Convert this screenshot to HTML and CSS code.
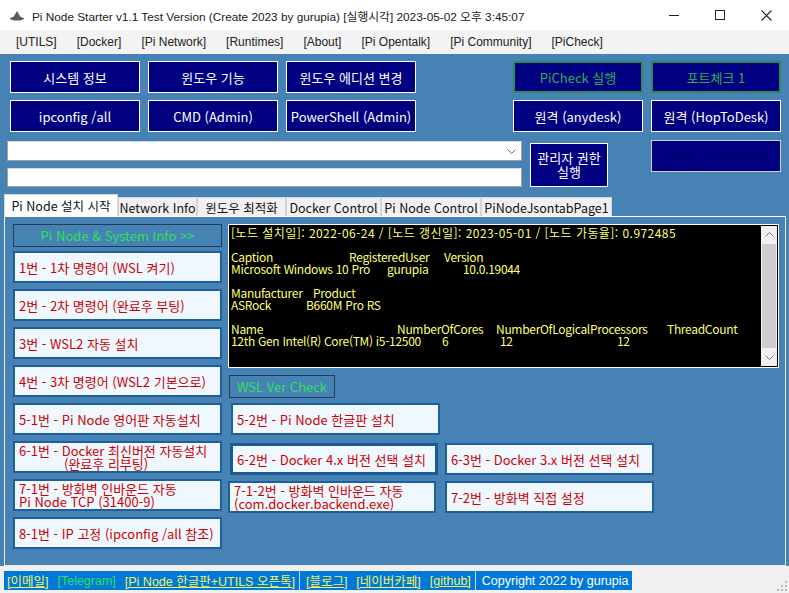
FILE: index.html
```html
<!DOCTYPE html>
<html lang="ko">
<head>
<meta charset="utf-8">
<title>Pi Node Starter</title>
<link rel="stylesheet" href="styles.css">
</head>
<body>
<div class="window">
  <div class="titlebar">
    <svg class="app-icon" width="14" height="10" viewBox="0 0 14 10"><path d="M7 0 L10.5 6 H3.5 Z" fill="#5a5a5a"/><ellipse cx="7" cy="7.6" rx="7" ry="2" fill="#5a5a5a"/></svg>
    <span class="title-text">Pi Node Starter v1.1 Test Version (Create 2023 by gurupia) [실행시각] 2023-05-02 오후 3:45:07</span>
    <div class="win-controls">
      <div class="wc"><span class="wc-min"></span></div>
      <div class="wc"><span class="wc-max"></span></div>
      <div class="wc"><svg width="11" height="11" viewBox="0 0 11 11"><path d="M0.5 0.5 L10.5 10.5 M10.5 0.5 L0.5 10.5" stroke="#222" stroke-width="1.1"/></svg></div>
    </div>
  </div>
  <div class="menubar">
    <span>[UTILS]</span><span>[Docker]</span><span>[Pi Network]</span><span>[Runtimes]</span><span>[About]</span><span>[Pi Opentalk]</span><span>[Pi Community]</span><span>[PiCheck]</span>
  </div>

  <div class="main">
    <div class="top">
      <div class="btn-row">
        <div class="group">
          <div class="nbtn">시스템 정보</div>
          <div class="nbtn">윈도우 기능</div>
          <div class="nbtn">윈도우 에디션 변경</div>
        </div>
        <div class="group right">
          <div class="nbtn green">PiCheck 실행</div>
          <div class="nbtn green">포트체크 1</div>
        </div>
      </div>
      <div class="btn-row second">
        <div class="group">
          <div class="nbtn">ipconfig /all</div>
          <div class="nbtn">CMD (Admin)</div>
          <div class="nbtn">PowerShell (Admin)</div>
        </div>
        <div class="group right">
          <div class="nbtn">원격 (anydesk)</div>
          <div class="nbtn">원격 (HopToDesk)</div>
        </div>
      </div>
      <div class="lower">
        <div class="inputs">
          <div class="combo"><svg width="9" height="5" viewBox="0 0 9 5"><path d="M0.5 0.5 L4.5 4.5 L8.5 0.5" stroke="#666" fill="none"/></svg></div>
          <div class="textbox"></div>
        </div>
        <div class="nbtn admin"><span>관리자 권한</span><span>실행</span></div>
        <div class="nbtn quick">Quick Command</div>
      </div>
    </div>

    <div class="tabs">
      <div class="tab active">Pi Node 설치 시작</div>
      <div class="tab">Network Info</div>
      <div class="tab">윈도우 최적화</div>
      <div class="tab">Docker Control</div>
      <div class="tab">Pi Node Control</div>
      <div class="tab">PiNodeJsontabPage1</div>
    </div>

    <div class="page">
      <div class="left-col">
        <div class="info-btn">Pi Node &amp; System Info &gt;&gt;</div>
        <div class="lbtn first">1번 - 1차 명령어 (WSL 켜기)</div>
        <div class="lbtn">2번 - 2차 명령어 (완료후 부팅)</div>
        <div class="lbtn">3번 - WSL2 자동 설치</div>
        <div class="lbtn">4번 - 3차 명령어 (WSL2 기본으로)</div>
        <div class="lbtn">5-1번 - Pi Node 영어판 자동설치</div>
        <div class="lbtn two"><span>6-1번 - Docker 최신버전 자동설치</span><span class="indent">(완료후 리부팅)</span></div>
        <div class="lbtn two"><span>7-1번 - 방화벽 인바운드 자동</span><span>Pi Node TCP (31400-9)</span></div>
        <div class="lbtn">8-1번 - IP 고정 (ipconfig /all 참조)</div>
      </div>
      <div class="right-area">
        <div class="console">
          <div class="console-text">
            <div class="ln wide">[노드 설치일]: 2022-06-24 / [노드 갱신일]: 2023-05-01 / [노드 가동율]: 0.972485</div>
            <div class="ln"></div>
            <div class="ln"><span class="c c118">Caption</span><span class="c c95">RegisteredUser</span><span class="c">Version</span></div>
            <div class="ln"><span class="c c156">Microsoft Windows 10 Pro</span><span class="c c76">gurupia</span><span class="c">10.0.19044</span></div>
            <div class="ln"></div>
            <div class="ln"><span class="c c82">Manufacturer</span><span class="c">Product</span></div>
            <div class="ln"><span class="c c75">ASRock</span><span class="c">B660M Pro RS</span></div>
            <div class="ln"></div>
            <div class="ln"><span class="c c166">Name</span><span class="c c99">NumberOfCores</span><span class="c c171">NumberOfLogicalProcessors</span><span class="c">ThreadCount</span></div>
            <div class="ln"><span class="c c211">12th Gen Intel(R) Core(TM) i5-12500</span><span class="c c58">6</span><span class="c c117">12</span><span class="c">12</span></div>
          </div>
          <div class="scrollbar">
            <div class="sb-arrow"><svg width="9" height="5" viewBox="0 0 9 5"><path d="M0.5 4.5 L4.5 0.5 L8.5 4.5" stroke="#777" fill="none"/></svg></div>
            <div class="sb-track"><div class="sb-thumb"></div></div>
            <div class="sb-arrow"><svg width="9" height="5" viewBox="0 0 9 5"><path d="M0.5 0.5 L4.5 4.5 L8.5 0.5" stroke="#777" fill="none"/></svg></div>
          </div>
        </div>
        <div class="wsl-btn">WSL Ver Check</div>
        <div class="mrow r1">
          <div class="lbtn m52">5-2번 - Pi Node 한글판 설치</div>
        </div>
        <div class="mrow r2">
          <div class="lbtn m62">6-2번 - Docker 4.x 버전 선택 설치</div>
          <div class="lbtn m63">6-3번 - Docker 3.x 버전 선택 설치</div>
        </div>
        <div class="mrow r3">
          <div class="lbtn two m712"><span>7-1-2번 - 방화벽 인바운드 자동</span><span>(com.docker.backend.exe)</span></div>
          <div class="lbtn m72">7-2번 - 방화벽 직접 설정</div>
        </div>
      </div>
    </div>

    <div class="statusbar">
      <div class="status-strip">
        <span class="link">[이메일]</span>
        <span class="tg">[Telegram]</span>
        <span class="link">[Pi Node 한글판+UTILS 오픈톡]</span>
        <span class="sep"></span>
        <span class="link">[블로그]</span>
        <span class="link">[네이버카페]</span>
        <span class="link">[github]</span>
        <span class="sep"></span>
        <span class="copy">Copyright 2022 by gurupia</span>
      </div>
      <svg class="grip" width="10" height="10" viewBox="0 0 10 10">
        <rect x="8" y="0" width="2" height="2" fill="#b5b5b5"/>
        <rect x="4" y="4" width="2" height="2" fill="#b5b5b5"/><rect x="8" y="4" width="2" height="2" fill="#b5b5b5"/>
        <rect x="0" y="8" width="2" height="2" fill="#b5b5b5"/><rect x="4" y="8" width="2" height="2" fill="#b5b5b5"/><rect x="8" y="8" width="2" height="2" fill="#b5b5b5"/>
      </svg>
    </div>
  </div>
</div>
</body>
</html>
```
FILE: styles.css
```css
* { box-sizing: border-box; }
html, body { margin: 0; padding: 0; }
body {
  width: 789px;
  height: 593px;
  overflow: hidden;
  background: #4682b4;
  font-family: "Noto Sans CJK KR", "Noto Sans", sans-serif;
}
.window { width: 789px; height: 593px; display: flex; flex-direction: column; }

/* title bar */
.titlebar {
  height: 30px;
  background: #ffffff;
  display: flex;
  align-items: center;
  padding-left: 10px;
  color: #1a1a1a;
}
.app-icon { margin-right: 8px; margin-top: 1px; flex: none; }
.title-text {
  flex: 1;
  min-width: 0;
  overflow: hidden;
  font-family: "Liberation Sans", "Noto Sans CJK KR", sans-serif;
  font-size: 11.8px;
  white-space: nowrap;
}
.win-controls { flex: none; display: flex; height: 30px; }
.wc { width: 46px; height: 30px; display: flex; align-items: center; justify-content: center; flex: none; }
.wc-min { width: 10px; height: 1px; background: #222; }
.wc-max { width: 10px; height: 10px; border: 1px solid #222; }

/* menu */
.menubar {
  height: 25px;
  background: #f3f3f3;
  display: flex;
  align-items: center;
  padding-left: 16px;
  gap: 20px;
  font-family: "Liberation Sans", "Noto Sans CJK KR", sans-serif;
  font-size: 12px;
  color: #222;
  white-space: nowrap;
}

.main { flex: 1; display: flex; flex-direction: column; }

/* top area */
.top { padding-top: 7px; }
.btn-row { display: flex; padding-left: 10px; }
.btn-row.second { margin-top: 7px; }
.group { display: flex; gap: 8px; }
.group.right { margin-left: 97px; }
.nbtn {
  width: 130px;
  height: 32px;
  background: #000080;
  border: 1px solid #ffffff;
  color: #ffffff;
  font-size: 13px;
  display: flex;
  align-items: center;
  justify-content: center;
  text-align: center;
  white-space: nowrap;
}
.nbtn.green { border: 2px solid #2e8b57; color: #2cb24a; }
.lower { display: flex; margin-top: 8px; }
.inputs { margin-left: 7px; width: 515px; margin-top: 1px; }
.combo {
  height: 20px;
  background: #ffffff;
  border: 1px solid #a0a0a0;
  border-top-color: #d8d8d8;
  display: flex;
  align-items: center;
  justify-content: flex-end;
  padding-right: 5px;
}
.textbox { height: 19px; margin-top: 7px; background: #ffffff; border: 1px solid #a0a0a0; border-top-color: #d8d8d8; }
.nbtn.admin {
  width: 78px;
  height: 44px;
  margin-left: 8px;
  margin-top: 3px;
  flex-direction: column;
  line-height: 14px;
}
.nbtn.quick { margin-left: 43px; border-color: #d0d0d0; color: #00006e; }

/* tabs */
.tabs { display: flex; align-items: flex-end; margin-top: 7px; padding-left: 4px; height: 22px; }
.tab {
  height: 19px;
  background: #f0f0f0;
  border: 1px solid #d4d4d4;
  border-bottom: none;
  font-size: 12.5px;
  color: #111;
  display: flex;
  align-items: center;
  justify-content: center;
  white-space: nowrap;
}
.tab:nth-child(2) { width: 79px; }
.tab:nth-child(3) { width: 89px; }
.tab:nth-child(4) { width: 95px; }
.tab:nth-child(5) { width: 100px; }
.tab:nth-child(6) { width: 131px; }
.tab.active { width: 114px; height: 22px; background: #ffffff; border-color: #d4d4d4; }

/* tab page */
.page {
  margin-left: 4px;
  width: 782px;
  height: 350px;
  border: 1px solid #eaeaea;
  border-top-color: #ffffff;
  display: flex;
  padding: 7px 0 0 8px;
}
.left-col { width: 209px; display: flex; flex-direction: column; gap: 6px; }
.info-btn {
  height: 23px;
  background: #4682b4;
  border: 1px solid #1f3d5c;
  color: #2fe05a;
  font-size: 13px;
  display: flex;
  align-items: center;
  justify-content: center;
  white-space: nowrap;
}
.lbtn {
  width: 209px;
  height: 32px;
  background: #f0f8ff;
  border: 2px solid #1e5f9e;
  color: #cc0000;
  font-size: 13px;
  line-height: 13px;
  display: flex;
  align-items: center;
  padding-left: 4px;
  white-space: nowrap;
}
.lbtn.first { margin-top: -2px; }
.lbtn.two { flex-direction: column; align-items: flex-start; justify-content: center; line-height: 13.5px; }
.lbtn .indent { padding-left: 45px; }

.right-area { margin-left: 6px; display: flex; flex-direction: column; }
.console {
  width: 551px;
  height: 144px;
  background: #000000;
  border: 1px solid #ffffff;
  display: flex;
}
.console-text {
  flex: 1;
  padding: 2px 0 0 2px;
  color: #ffff70;
  font-size: 12px;
  line-height: 12px;
  letter-spacing: -0.3px;
}
.ln { height: 12px; white-space: pre; display: flex; }
.ln.wide { letter-spacing: 0.45px; }
.c { display: inline-block; white-space: pre; flex: none; }
.c58 { width: 58px; } .c75 { width: 75px; } .c76 { width: 76px; } .c82 { width: 82px; }
.c95 { width: 95px; } .c99 { width: 99px; } .c117 { width: 117px; } .c118 { width: 118px; }
.c156 { width: 156px; } .c166 { width: 166px; } .c171 { width: 171px; } .c211 { width: 211px; }

.scrollbar { width: 16px; margin: 1px 1px 1px 0; background: #f0f0f0; display: flex; flex-direction: column; }
.sb-arrow { height: 17px; display: flex; align-items: center; justify-content: center; }
.sb-track { flex: 1; padding: 1px 1px; }
.sb-thumb { height: 100%; background: #cdcdcd; }

.wsl-btn {
  width: 106px;
  height: 23px;
  margin-top: 7px;
  margin-left: 1px;
  background: #4682b4;
  border: 1px solid #1f3d5c;
  color: #2fe05a;
  font-size: 13px;
  display: flex;
  align-items: center;
  justify-content: center;
  white-space: nowrap;
}
.mrow { display: flex; }
.mrow.r1 { margin-top: 5px; }
.mrow.r2 { margin-top: 8px; }
.mrow.r3 { margin-top: 6px; }
.lbtn.m52 { margin-left: 3px; padding-left: 4px; }
.lbtn.m62 { margin-left: 2px; width: 208px; border-width: 3px; border-color: #1b5a96; }
.lbtn.m63 { margin-left: 7px; }
.lbtn.m712 { width: 208px; }
.lbtn.m72 { margin-left: 9px; }

/* status */
.statusbar {
  height: 27px;
  background: #f0f0f0;
  display: flex;
  align-items: flex-start;
  padding: 5px 0 0 4px;
  position: relative;
}
.status-strip {
  height: 19px;
  background: #0078d7;
  display: flex;
  align-items: center;
  font-family: "Liberation Sans", "Noto Sans CJK KR", sans-serif;
  font-size: 12.5px;
  white-space: nowrap;
  padding-left: 3px;
}
.status-strip span { margin-right: 9px; }
.link { color: #f2f25a; text-decoration: underline; }
.tg { color: #2fe05a; }
.sep { width: 1px; height: 19px; background: #c8dcf0; margin-right: 6px !important; margin-left: -5px; }
.copy { color: #ffffff; margin-right: 4px !important; }
.grip { position: absolute; right: 2px; bottom: 2px; }
```
